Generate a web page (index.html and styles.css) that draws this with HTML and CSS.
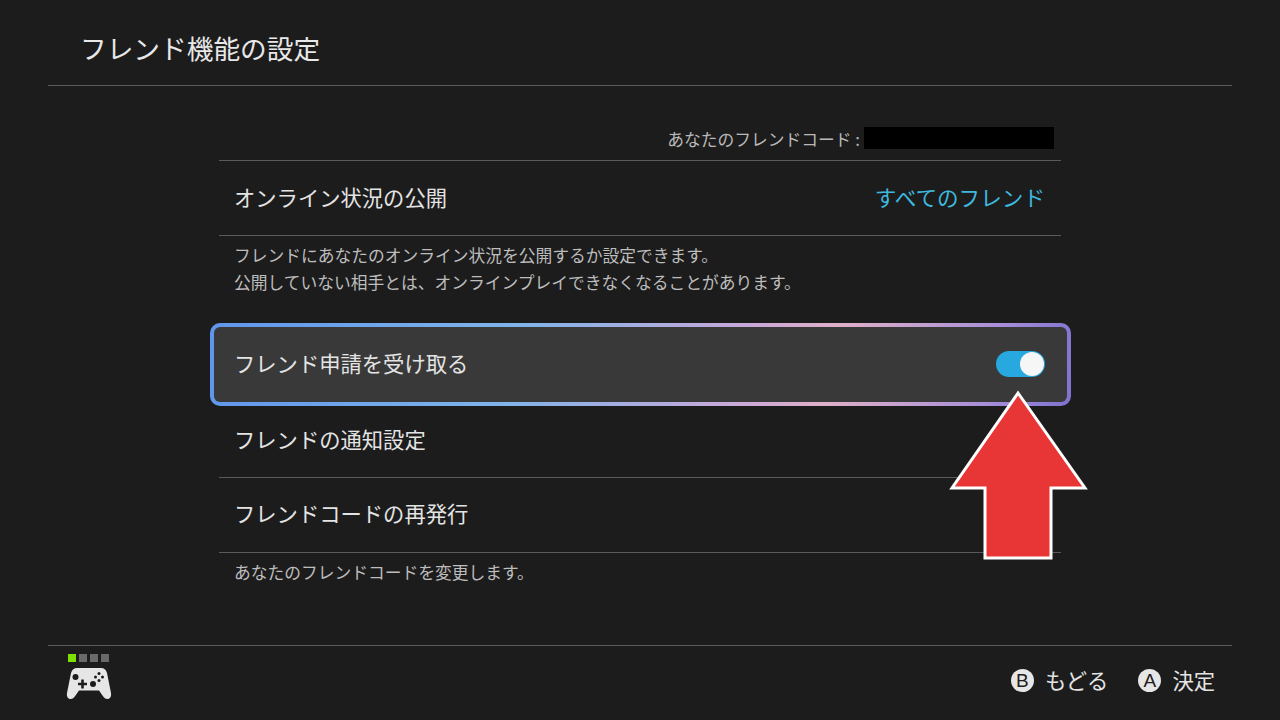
FILE: index.html
```html
<!DOCTYPE html>
<html lang="ja">
<head>
<meta charset="utf-8">
<title>フレンド機能の設定</title>
<link rel="stylesheet" href="styles.css">
</head>
<body>
<div class="screen">
  <header class="header"><h1 class="title">フレンド機能の設定</h1></header>
  <main class="main">
    <div class="column">
      <div class="code-row">
        <span class="code-label">あなたのフレンドコード :</span>
        <span class="code-mask"></span>
      </div>
      <div class="row row-public">
        <span>オンライン状況の公開</span>
        <span class="value">すべてのフレンド</span>
      </div>
      <p class="desc desc-public">フレンドにあなたのオンライン状況を公開するか設定できます。<br>公開していない相手とは、オンラインプレイできなくなることがあります。</p>
      <div class="selected">
        <div class="selected-inner">
          <span>フレンド申請を受け取る</span>
          <span class="toggle"><span class="knob"></span></span>
        </div>
      </div>
      <div class="row row-notify"><span>フレンドの通知設定</span></div>
      <div class="row row-reissue"><span>フレンドコードの再発行</span></div>
      <p class="desc desc-reissue">あなたのフレンドコードを変更します。</p>
    </div>
  </main>
  <footer class="footer">
    <div class="player">
      <div class="leds"><i class="led on"></i><i class="led"></i><i class="led"></i><i class="led"></i></div>
      <svg class="pad" width="46" height="34" viewBox="0 0 46 34">
        <path fill="#e6e6e6" d="M11 2h24c3 0 5 1.500 6 5l4 20c.6 3.500-1 6-3.500 6-2 0-3.500-1-5-3.500L33 24.500H13l-3.500 5C8 32 6.500 33 4.500 33 2 33 .4 30.500 1 27L5 7c1-3.500 3-5 6-5z"/>
        <circle cx="9.500" cy="11" r="3" fill="#1c1c1c"/>
        <circle cx="27" cy="18" r="3" fill="#1c1c1c"/>
        <path fill="#1c1c1c" d="M15.200 13.500h2.600v3.200H21v2.600h-3.200v3.200h-2.600v-3.200H12v-2.600h3.200z"/>
        <circle cx="33" cy="7.500" r="1.500" fill="#1c1c1c"/>
        <circle cx="33" cy="14.500" r="1.500" fill="#1c1c1c"/>
        <circle cx="29.500" cy="11" r="1.500" fill="#1c1c1c"/>
        <circle cx="36.500" cy="11" r="1.500" fill="#1c1c1c"/>
      </svg>
    </div>
    <div class="actions">
      <div class="action"><span class="btn">B</span><span>もどる</span></div>
      <div class="action"><span class="btn">A</span><span>決定</span></div>
    </div>
  </footer>
  <svg class="arrow" width="140" height="172" viewBox="0 0 140 172">
    <path fill="#e83535" stroke="#fff" stroke-width="3" d="M69 3 L136 98 H102 V168 H36 V98 H3 Z"/>
  </svg>
</div>
</body>
</html>
```
FILE: styles.css
```css
* { box-sizing: border-box; }
html, body { margin: 0; padding: 0; }
body {
  background: #1c1c1c;
  color: #e4e4e4;
  font-family: "Noto Sans CJK JP", "Noto Sans", sans-serif;
}
.screen {
  position: relative;
  width: 1280px;
  height: 720px;
  overflow: hidden;
  display: flex;
  flex-direction: column;
}
.header {
  height: 86px;
  margin: 0 48px;
  padding: 12px 0 0 32px;
  border-bottom: 1px solid #5a5a5a;
  display: flex;
  align-items: center;
}
.title {
  margin: 0;
  font-size: 26.700px;
  font-weight: 400;
  color: #e8e8e8;
  line-height: 1;
}
.main {
  flex: 1;
  display: flex;
  justify-content: center;
}
.column {
  width: 842px;
  display: flex;
  flex-direction: column;
  padding-top: 40px;
}
.code-row {
  height: 35px;
  display: flex;
  justify-content: flex-end;
  align-items: flex-start;
  padding-right: 7px;
  border-bottom: 1px solid #5a5a5a;
}
.code-label {
  font-size: 16.750px;
  line-height: 27px;
  color: #b9b9b9;
  margin-right: 4px;
}
.code-mask {
  width: 190px;
  height: 22px;
  margin-top: 1px;
  background: #000;
}
.row {
  display: flex;
  justify-content: space-between;
  align-items: center;
  padding: 0 16px 4px 15px;
  font-size: 21.300px;
  border-bottom: 1px solid #5a5a5a;
  color: #e4e4e4;
}
.row-public { height: 75px; }
.row-notify { height: 72px; padding-bottom: 6px; }
.row-reissue { height: 75px; padding-bottom: 6px; }
.value { color: #3fb8de; font-size: 21.600px; }
.desc {
  margin: 0;
  padding: 0 15px;
  font-size: 16.750px;
  line-height: 27px;
  color: #bdbdbd;
}
.desc-public { height: 87px; padding-top: 6px; }
.desc-reissue { padding-top: 6px; }
.selected {
  margin: 0 -10px 0 -9px;
  height: 83px;
  padding: 4px;
  border-radius: 10px;
  background: linear-gradient(100deg, #5f96ec 0%, #7fb4ea 35%, #c9a8d8 62%, #e0b0c8 72%, #a88fd8 90%, #7f72d0 100%);
}
.selected-inner {
  height: 100%;
  border-radius: 6px;
  background: #393939;
  display: flex;
  justify-content: space-between;
  align-items: center;
  padding: 0 22px 0 20px;
  font-size: 21.300px;
  color: #e4e4e4;
}
.selected-inner > span:first-child { padding-bottom: 5px; }
.toggle {
  width: 49px;
  height: 26px;
  margin-bottom: 1px;
  border-radius: 13px;
  background: #27a8df;
  position: relative;
  display: block;
}
.knob {
  position: absolute;
  right: 1px;
  top: 1px;
  width: 24px;
  height: 24px;
  border-radius: 50%;
  background: #f6f6f6;
}
.footer {
  height: 75px;
  margin: 0 48px;
  padding: 8px 17px 0 18px;
  border-top: 1px solid #5a5a5a;
  display: flex;
  justify-content: space-between;
  align-items: flex-start;
}
.player {
  display: flex;
  flex-direction: column;
  gap: 4px;
}
.leds {
  display: flex;
  gap: 3px;
  margin-left: 2px;
}
.led {
  display: block;
  width: 8px;
  height: 8px;
  background: #6a6a6a;
}
.led.on { background: #7fe000; }
.pad { display: block; }
.actions {
  display: flex;
  gap: 30px;
  margin-top: 11px;
}
.action {
  display: flex;
  align-items: center;
  gap: 11px;
  font-size: 21.300px;
  line-height: 30px;
  color: #e4e4e4;
}
.btn {
  width: 23px;
  height: 23px;
  border-radius: 50%;
  background: #e6e6e6;
  color: #1c1c1c;
  font-family: "Liberation Sans", sans-serif;
  font-size: 19px;
  line-height: 23px;
  text-align: center;
}
.arrow {
  position: absolute;
  left: 949px;
  top: 390px;
}
```
